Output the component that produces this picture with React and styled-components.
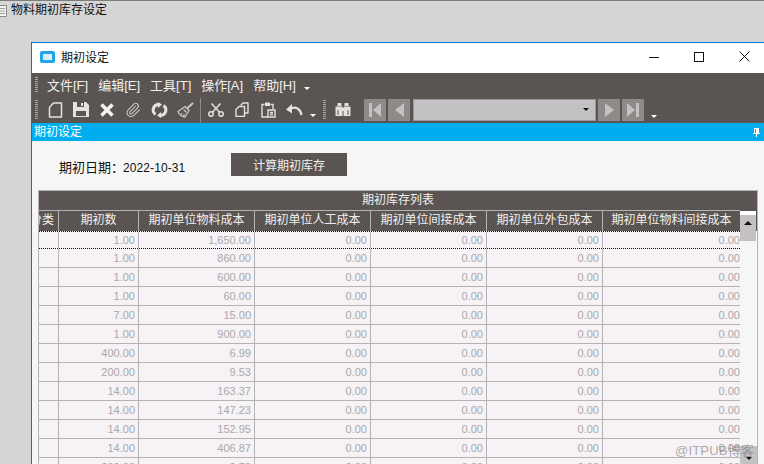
import React from 'react';
import styled, { createGlobalStyle } from 'styled-components';
import { Paperclip } from 'lucide-react';

const GlobalStyle = createGlobalStyle`
  html, body {
    margin: 0;
    padding: 0;
    background: #d5d5d5;
  }
  body {
    width: 764px;
    height: 464px;
    overflow: hidden;
    font-family: "Liberation Sans", "Noto Sans CJK SC", sans-serif;
  }
`;

const colors = {
  dark: '#5a5552',
  line: '#b3b3b3',
  blue: '#00adef',
  edge: '#0078d7',
  icon: '#e4e2e0',
  nav: '#8e8a87',
  thumb: '#c3c1c3'
};

const Page = styled.div`
  width: 764px;
  height: 464px;
  overflow: hidden;
  position: relative;
  border-top: 1px solid #7d7d7d;
  box-sizing: border-box;
`;

const PageTitle = styled.div`
  height: 41px;
  display: flex;
  gap: 4px;
  padding-top: 1px;
  box-sizing: border-box;
  font-size: 12px;
  line-height: 17px;
  color: #111;
`;

const PageIcon = styled.svg`
  width: 7px;
  height: 12px;
  margin-top: 3px;
`;

const Window = styled.div`
  margin-left: 31px;
  width: 733px;
  height: 422px;
  box-sizing: border-box;
  border-top: 1px solid ${colors.edge};
  border-left: 1px solid ${colors.edge};
  background: #f6f6f6;
  overflow: hidden;
`;

const TitleBar = styled.div`
  height: 30px;
  box-sizing: border-box;
  padding: 0 0 3px 8px;
  background: #fff;
  display: flex;
  align-items: center;
  color: #111;
  font-size: 12px;
`;

const TitleText = styled.span`
  margin-left: 6px;
  flex: 1;
`;

const WinButtons = styled.div`
  display: flex;
  align-items: center;
  gap: 35px;
  padding-right: 14px;
`;

const Bars = styled.div`
  background: ${colors.dark};
  height: 50px;
  box-sizing: border-box;
`;

const MenuBar = styled.div`
  height: 23px;
  padding: 0 0 1px 3px;
  box-sizing: border-box;
  display: flex;
  align-items: center;
  color: #f2f0ee;
  font-size: 13px;
`;

const Grip = styled.i`
  display: block;
  width: 3px;
  height: ${p => p.$h}px;
  background: repeating-linear-gradient(to bottom, #aaa6a3 0 1px, transparent 1px 2px);
  flex: none;
`;

const MenuItem = styled.span`
  margin-left: 10px;
  white-space: nowrap;

  &:nth-child(2) {
    margin-left: 9px;
  }
`;

const SmallArrow = styled.i`
  display: block;
  width: 0;
  height: 0;
  border-left: 3px solid transparent;
  border-right: 3px solid transparent;
  border-top: 3px solid ${p => p.$dark ? '#111' : '#fff'};
  margin: ${p => p.$m || '0'};
  flex: none;
`;

const ToolBar = styled.div`
  height: 27px;
  display: flex;
  align-items: center;
  padding-left: 3px;
`;

const ToolGroup = styled.div`
  display: flex;
  align-items: center;
  margin: ${p => p.$m};
  flex: none;
`;

const Tool = styled.span`
  width: 26px;
  height: 20px;
  display: flex;
  align-items: center;
  justify-content: center;
  flex: none;
  color: ${p => p.$soft ? '#c9c7c5' : colors.icon};
`;

const Divider = styled.i`
  display: block;
  width: 1px;
  height: 25px;
  background: #8f8b88;
  margin: 1px 2px 0 2px;
  flex: none;
`;

const NavButton = styled.span`
  width: 22px;
  height: 22px;
  margin-right: 2px;
  background: ${colors.nav};
  display: flex;
  align-items: center;
  justify-content: center;
  flex: none;
`;

const Combo = styled.div`
  width: 183px;
  height: 22px;
  box-sizing: border-box;
  border: 1px solid #9b9794;
  background: ${colors.thumb};
  margin: 0 2px 0 1px;
  display: flex;
  align-items: center;
  justify-content: flex-end;
  padding-right: 6px;
  flex: none;
`;

const PanelHead = styled.div`
  height: 18px;
  background: ${colors.blue};
  color: #fff;
  font-size: 12px;
  line-height: 17px;
  padding-left: 2px;
  display: flex;
  justify-content: space-between;
  align-items: center;
`;

const Pin = styled.svg`
  width: 7px;
  height: 9px;
  margin-right: 4px;
`;

const Form = styled.div`
  height: 49px;
  display: flex;
  align-items: flex-start;
  padding: 12px 0 0 27px;
  box-sizing: border-box;
`;

const DateText = styled.div`
  width: 172px;
  font-size: 13px;
  line-height: 23px;
  padding-top: 3px;
  color: #111;
`;

const DateValue = styled.span`
  font-size: 12px;
  letter-spacing: 0.1px;
  margin-left: -1px;
`;

const CalcButton = styled.button`
  width: 116px;
  height: 23px;
  border: 0;
  padding: 0;
  background: ${colors.dark};
  color: #f2f0ee;
  font: inherit;
  font-size: 12px;
`;

const Grid = styled.div`
  margin-left: 6px;
  width: 720px;
  box-sizing: border-box;
  border: 1px solid ${colors.line};
  border-bottom: 0;
  position: relative;
`;

const GridCaption = styled.div`
  height: 19px;
  background: ${colors.dark};
  color: #f2f0ee;
  font-size: 12px;
  line-height: 19px;
  text-align: center;
`;

const HeadRow = styled.div`
  display: grid;
  grid-template-columns: 19px 80px 116px 116px 116px 116px 138px 17px;
  height: 21px;
  background: ${colors.dark};
`;

const HeadCell = styled.div`
  border-top: 1px solid ${colors.line};
  border-left: 1px solid ${colors.line};
  color: #f2f0ee;
  font-size: 12px;
  line-height: 19px;
  text-align: center;
  overflow: hidden;
  white-space: nowrap;
`;

const ClippedHead = styled(HeadCell)`
  border-left: 0;
  display: flex;
  justify-content: flex-end;
  padding-right: 4px;
`;

const ScrollHead = styled.div`
  margin: 1px 1px 0 0;
  background: linear-gradient(to bottom, #fff 0 4px, ${colors.thumb} 4px);
  display: flex;
  align-items: center;
  justify-content: center;
  padding-top: 4px;
  box-sizing: border-box;
`;

const Body = styled.div`
  display: grid;
  grid-template-columns: 1fr 17px;
`;

const Rows = styled.div`
  background: #f6f2f6;
`;

const Row = styled.div`
  display: grid;
  grid-template-columns: 19px 80px 116px 116px 116px 116px 138px;
  height: 19px;
  box-sizing: border-box;
  border-bottom: ${p => p.$active ? '1px dotted #111' : `1px solid ${colors.line}`};
  line-height: 18px;
  ${p => p.$active && 'border-top: 1px dotted #111; height: 18px; line-height: 16px;'}
`;

const Cell = styled.div`
  border-left: 1px solid ${colors.line};
  color: #a9a9a9;
  font-size: 11px;
  text-align: right;
  padding-right: 3px;
  overflow: hidden;
  white-space: nowrap;

  &:first-child {
    border-left: 0;
  }

  &:last-child {
    padding-right: 0;
  }
`;

const Scroll = styled.div`
  display: flex;
  flex-direction: column;
  justify-content: space-between;
  height: 240px;
  background: #f6f6f6;
`;

const ThumbTop = styled.div`
  height: 10px;
  background: ${colors.thumb};
  margin-right: 1px;
`;

const ScrollButton = styled.div`
  height: 25px;
  background: ${colors.thumb};
  display: flex;
  align-items: center;
  justify-content: center;
`;

const UpArrow = styled.i`
  display: block;
  width: 0;
  height: 0;
  border-left: 4px solid transparent;
  border-right: 4px solid transparent;
  border-bottom: 4px solid #111;
`;

const Watermark = styled.div`
  position: absolute;
  left: 675px;
  top: 439px;
  font-size: 13px;
  color: rgba(120, 120, 120, 0.62);
  letter-spacing: 0.2px;
`;

const menus = ['文件[F]', '编辑[E]', '工具[T]', '操作[A]', '帮助[H]'];

const heads = ['期初数', '期初单位物料成本', '期初单位人工成本', '期初单位间接成本', '期初单位外包成本', '期初单位物料间接成本'];

const data = [
  ['1.00', '1,650.00'],
  ['1.00', '860.00'],
  ['1.00', '600.00'],
  ['1.00', '60.00'],
  ['7.00', '15.00'],
  ['1.00', '900.00'],
  ['400.00', '6.99'],
  ['200.00', '9.53'],
  ['14.00', '163.37'],
  ['14.00', '147.23'],
  ['14.00', '152.95'],
  ['14.00', '406.87'],
  ['200.00', '2.78']
];

const FileIcon = () => (
  <svg width="15" height="16" viewBox="0 0 15 16" fill="none" stroke="currentColor" strokeWidth="1.5">
    <path d="M5.5 1H13.5V15H1.5V5.2Z" strokeLinejoin="round" />
  </svg>
);

const SaveIcon = () => (
  <svg width="16" height="15" viewBox="0 0 16 15">
    <path fill="currentColor" fillRule="evenodd" d="M0 0h13l3 3v12H0ZM4 0v5h7V0ZM3 9v5h10V9Z" />
    <path fill="currentColor" d="M8 1h2v3H8Z" />
  </svg>
);

const CrossIcon = () => (
  <svg width="14" height="14" viewBox="0 0 14 14" stroke="#f5f3f1" strokeWidth="3.6">
    <path d="M1.5 1.5L12.5 12.5M12.5 1.5L1.5 12.5" />
  </svg>
);

const SyncIcon = () => (
  <svg width="17" height="16" viewBox="0 0 17 16" fill="none" stroke="currentColor" strokeWidth="3">
    <path d="M7.5 2.5A5.5 5.5 0 0 0 4.5 12.5" />
    <path d="M9.5 13.5A5.5 5.5 0 0 0 12.5 3.5" />
    <path fill="currentColor" stroke="none" d="M7 0l4 2.5L7 6ZM10 10l-4 3.5L10 16Z" />
  </svg>
);

const BroomIcon = () => (
  <svg width="17" height="16" viewBox="0 0 17 16" fill="none" stroke="currentColor" strokeWidth="1.3" strokeLinejoin="round">
    <path d="M16 1L10.5 6" strokeWidth="2" />
    <path d="M8 4.5L12 8.5L8 15C5 14.5 2 12 1 9.5Z" />
    <path d="M5 11L4 12.5M7.5 12L6.5 14M6.5 7.5L9.5 10.5" />
  </svg>
);

const ScissorsIcon = () => (
  <svg width="16" height="14" viewBox="0 0 16 14" fill="none" stroke="currentColor" strokeWidth="1.5">
    <circle cx="3" cy="11" r="2.2" />
    <circle cx="13" cy="11" r="2.2" />
    <path d="M4.5 9.3L12.5 0.5M11.5 9.3L3.5 0.5" />
  </svg>
);

const CopyIcon = () => (
  <svg width="15" height="15" viewBox="0 0 15 15" fill="none" stroke="currentColor" strokeWidth="1.4" strokeLinejoin="round">
    <path d="M6 3.5V3L8 1H13V11H10" />
    <path d="M1 7.5L4 4.5H9.5V14.5H1Z" />
  </svg>
);

const ClipboardIcon = () => (
  <svg width="15" height="16" viewBox="0 0 15 16" fill="none" stroke="currentColor" strokeWidth="1.4">
    <path d="M3.5 2.5H1V15H7M9.5 2.5H12V7" />
    <path fill="currentColor" stroke="none" d="M4 0.5H9V4H4Z" />
    <path d="M7 8H14V15H7ZM9 10.5H12M9 12.5H12" />
  </svg>
);

const UndoIcon = () => (
  <svg width="17" height="12" viewBox="0 0 17 12" fill="none" stroke="currentColor" strokeWidth="2.4">
    <path d="M4 5C9 2 14 4 15.5 11" />
    <path fill="currentColor" stroke="none" d="M0 5.5L6 0V9.5Z" />
  </svg>
);

const BinocularsIcon = () => (
  <svg width="16" height="13" viewBox="0 0 16 13">
    <path fill="currentColor" d="M2.5 0h4v3h-4ZM9.5 0h4v3h-4ZM0.5 3.5h7V13h-7ZM8.5 3.5h7V13h-7ZM7 5h2v3H7Z" />
    <path fill={colors.dark} d="M2.5 7h1v5h-1ZM12.5 7h1v5h-1Z" />
  </svg>
);

const Triangle = ({ dir }) => (
  <svg width="9" height="14" viewBox="0 0 9 14">
    <path fill={colors.thumb} d={dir === 'left' ? 'M9 0V14L0 7Z' : 'M0 0V14L9 7Z'} />
  </svg>
);

const EndTriangle = ({ dir }) => (
  <svg width="12" height="14" viewBox="0 0 12 14">
    <path fill={colors.thumb} d={dir === 'left' ? 'M0 0h3v14H0ZM12 0V14L4 7Z' : 'M9 0h3v14H9ZM0 0V14L8 7Z'} />
  </svg>
);

const App = () => (
  <Page>
    <GlobalStyle />
    <PageTitle>
      <PageIcon viewBox="0 0 7 12">
        <path fill="#f4f4f4" stroke="#8a8a8a" d="M-2 .5h8.5v11H-2Z" />
        <path stroke="#9a9a9a" d="M0 3.5h5M0 6h5M0 8.5h5" />
      </PageIcon>
      <span>物料期初库存设定</span>
    </PageTitle>
    <Window>
      <TitleBar>
        <svg width="15" height="12" viewBox="0 0 15 12">
          <rect width="15" height="12" rx="2" fill="#25a3e4" />
          <rect x="3" y="3" width="9" height="6" fill="#d8f0fb" />
        </svg>
        <TitleText>期初设定</TitleText>
        <WinButtons>
          <svg width="10" height="10" viewBox="0 0 10 10" stroke="#111">
            <path d="M0 5.5H10" />
          </svg>
          <svg width="10" height="10" viewBox="0 0 10 10" fill="none" stroke="#111">
            <rect x=".5" y=".5" width="9" height="9" />
          </svg>
          <svg width="11" height="11" viewBox="0 0 11 11" stroke="#111">
            <path d="M.5 .5L10.5 10.5M10.5 .5L.5 10.5" />
          </svg>
        </WinButtons>
      </TitleBar>
      <Bars>
        <MenuBar>
          <Grip $h={15} />
          {menus.map(item => <MenuItem key={item}>{item}</MenuItem>)}
          <SmallArrow $m="9px 0 0 8px" />
        </MenuBar>
        <ToolBar>
          <Grip $h={20} />
          <ToolGroup $m="0 0 0 4px">
            <Tool><FileIcon /></Tool>
            <Tool><SaveIcon /></Tool>
            <Tool><CrossIcon /></Tool>
            <Tool $soft><Paperclip size={16} strokeWidth={1.6} /></Tool>
            <Tool><SyncIcon /></Tool>
            <Tool $soft><BroomIcon /></Tool>
          </ToolGroup>
          <Divider />
          <ToolGroup $m="0">
            <Tool><ScissorsIcon /></Tool>
            <Tool><CopyIcon /></Tool>
            <Tool><ClipboardIcon /></Tool>
            <Tool><UndoIcon /></Tool>
          </ToolGroup>
          <SmallArrow $m="12px 7px 0 3px" />
          <Grip $h={20} />
          <ToolGroup $m="0 8px 0 4px">
            <Tool><BinocularsIcon /></Tool>
          </ToolGroup>
          <NavButton><EndTriangle dir="left" /></NavButton>
          <NavButton><Triangle dir="left" /></NavButton>
          <Combo><SmallArrow $dark /></Combo>
          <NavButton><Triangle dir="right" /></NavButton>
          <NavButton><EndTriangle dir="right" /></NavButton>
          <SmallArrow $m="13px 0 0 5px" />
        </ToolBar>
      </Bars>
      <PanelHead>
        期初设定
        <Pin viewBox="0 0 7 9">
          <path fill="#fff" fillRule="evenodd" d="M1 0h5v5h1v1H4v3H3V6H0V5h1ZM2 1v4h1V1Z" />
        </Pin>
      </PanelHead>
      <Form>
        <DateText>期初日期：<DateValue>2022-10-31</DateValue></DateText>
        <CalcButton>计算期初库存</CalcButton>
      </Form>
      <Grid>
        <GridCaption>期初库存列表</GridCaption>
        <HeadRow>
          <ClippedHead>分类</ClippedHead>
          {heads.map(h => <HeadCell key={h}>{h}</HeadCell>)}
          <ScrollHead><UpArrow /></ScrollHead>
        </HeadRow>
        <Body>
          <Rows>
            {data.map((row, i) => (
              <Row key={i} $active={i === 0}>
                <Cell />
                <Cell>{row[0]}</Cell>
                <Cell>{row[1]}</Cell>
                <Cell>0.00</Cell>
                <Cell>0.00</Cell>
                <Cell>0.00</Cell>
                <Cell>0.00</Cell>
              </Row>
            ))}
          </Rows>
          <Scroll>
            <ThumbTop />
            <ScrollButton><SmallArrow $dark /></ScrollButton>
          </Scroll>
        </Body>
      </Grid>
    </Window>
    <Watermark>@ITPUB博客</Watermark>
  </Page>
);

export default App;
